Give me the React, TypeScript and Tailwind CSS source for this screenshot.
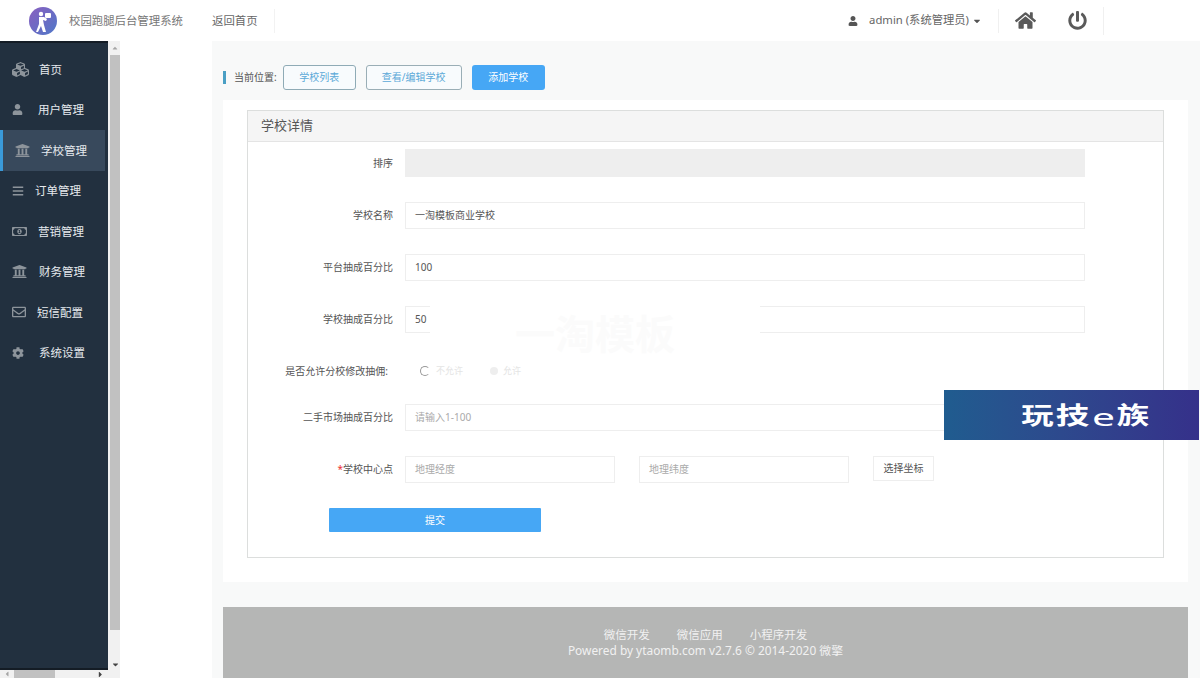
import {
  FaBars,
  FaCaretDown,
  FaCaretUp,
  FaCaretLeft,
  FaCaretRight,
  FaCog,
  FaCubes,
  FaHome,
  FaPowerOff,
  FaRegEnvelope,
  FaRegMoneyBillAlt,
  FaUniversity,
  FaUser,
} from 'react-icons/fa';

const font = 'font-["Noto_Sans","Noto_Sans_CJK_SC",sans-serif]';

const menus = [
  { title: '首页', icon: FaCubes, iconSize: 17, gap: 'gap-[10px]' },
  { title: '用户管理', icon: FaUser, iconSize: 11, gap: 'gap-[15px]' },
  { title: '学校管理', icon: FaUniversity, iconSize: 15, gap: 'gap-[11px]', active: true },
  { title: '订单管理', icon: FaBars, iconSize: 12, gap: 'gap-[11px]' },
  { title: '营销管理', icon: FaRegMoneyBillAlt, iconSize: 15, gap: 'gap-[11px]' },
  { title: '财务管理', icon: FaUniversity, iconSize: 15, gap: 'gap-[12px]' },
  { title: '短信配置', icon: FaRegEnvelope, iconSize: 14, gap: 'gap-[11px]' },
  { title: '系统设置', icon: FaCog, iconSize: 12, gap: 'gap-[15px]' },
];

function Header() {
  return (
    <div className="h-[41px] flex items-center bg-white shrink-0">
      <svg width="28" height="28" viewBox="0 0 28 28" className="ml-[29px] shrink-0">
        <defs>
          <linearGradient id="logo" x1="0" y1="0" x2="1" y2="1">
            <stop offset="0" stopColor="#8a5fc0" />
            <stop offset="1" stopColor="#4f78c8" />
          </linearGradient>
        </defs>
        <circle cx="14" cy="14" r="14" fill="url(#logo)" />
        <circle cx="12" cy="7" r="2.2" fill="#fff" />
        <path d="M10 10h5l3 2-1 2-3-1 1 5 2 7h-3l-2-6-3 6H7l3-8z" fill="#fff" />
        <rect x="16" y="6" width="6" height="5" rx="1" fill="#fff" />
      </svg>
      <span className="ml-[12px] w-[114px] text-[11.4px] whitespace-nowrap text-[#777]">校园跑腿后台管理系统</span>
      <span className="ml-[29px] text-[11.4px] text-[#666]">返回首页</span>
      <div className="ml-[16px] w-px h-[24px] bg-[#f2f2f2]" />
      <div className="ml-auto flex items-center h-[32px] text-[#666]">
        <FaUser size={10} className="text-[#555]" />
        <span className="ml-[11px] text-[11.3px]">admin (系统管理员)</span>
        <FaCaretDown size={10} className="ml-[3px] text-[#555]" />
        <div className="ml-[16px] w-px h-[24px] bg-[#f0f0f0]" />
        <FaHome size={21} className="ml-[16px] text-[#5a5a5a]" />
        <FaPowerOff size={19} className="ml-[32px] text-[#5a5a5a]" />
        <div className="ml-[16px] w-px h-[28px] bg-[#f0f0f0]" />
        <div className="w-[96px]" />
      </div>
    </div>
  );
}

function Sidebar() {
  return (
    <div className="w-[120px] shrink-0 flex flex-col">
      <div className="flex flex-1 min-h-0">
        <div className="w-[108px] bg-[#22303f] border-t-2 border-[#141c25] border-b-2 flex flex-col pt-[6px]">
          {menus.map((m) => {
            const Icon = m.icon;
            return (
              <div
                key={m.title}
                className={`h-[40.5px] flex items-center pl-[12px] ${m.gap} text-[11.5px] text-[#e6eaee] ${
                  m.active ? 'bg-[#38495c] border-l-[3px] border-[#3a9ad9] mr-[3px]' : ''
                }`}
              >
                <Icon size={m.iconSize} className="shrink-0 text-[#8d949b]" />
                <span>{m.title}</span>
              </div>
            );
          })}
        </div>
        <div className="w-[12px] bg-[#f1f1f1] flex flex-col items-center pl-[2px]">
          <FaCaretUp size={8} className="my-[3px] text-[#a5a5a5] shrink-0" />
          <div className="w-full h-[575px] bg-[#c1c1c1]" />
          <div className="flex-1" />
          <FaCaretDown size={9} className="mb-[1px] text-[#444]" />
        </div>
      </div>
      <div className="h-[8px] bg-[#f1f1f1] flex items-center overflow-hidden">
        <FaCaretLeft size={8} className="ml-[3px] text-[#a5a5a5]" />
        <div className="ml-[3px] w-[41px] h-full bg-[#c1c1c1]" />
        <FaCaretRight size={9} className="ml-[41px] text-[#444]" />
      </div>
    </div>
  );
}

function Row({
  label,
  className,
  labelClass = 'pr-[12px]',
  children,
}: {
  label: React.ReactNode;
  className: string;
  labelClass?: string;
  children: React.ReactNode;
}) {
  return (
    <div className={`flex items-center ${className}`}>
      <div className={`w-[157px] shrink-0 text-right text-[10px] whitespace-nowrap text-[#555] ${labelClass}`}>{label}</div>
      {children}
    </div>
  );
}

function Field({ value, placeholder, className }: { value?: string; placeholder?: string; className: string }) {
  return (
    <div className={`h-full flex items-center pl-[9px] pr-[10px] border border-[#eeeeee] bg-white text-[10px] ${className} ${value ? 'text-[#555]' : 'text-[#aaa]'}`}>
      {value ?? placeholder}
    </div>
  );
}

function Form() {
  return (
    <div className="border border-[#dcdedd] h-[448px] bg-white">
      <div className="h-[31px] flex items-center pl-[13px] bg-[#f5f5f5] border-b border-[#e4e4e4] text-[13px] text-[#555]">学校详情</div>
      <div className="pt-[7px]">
        <Row label="排序" className="h-[28px]">
          <div className="w-[680px] h-full bg-[#eeeeee]" />
        </Row>
        <Row label="学校名称" className="h-[27px] mt-[25px]">
          <Field value="一淘模板商业学校" className="w-[680px]" />
        </Row>
        <Row label="平台抽成百分比" className="h-[27px] mt-[25px]">
          <Field value="100" className="w-[680px]" />
        </Row>
        <Row label="学校抽成百分比" className="h-[27px] mt-[25px]">
          <Field value="50" className="w-[680px]" />
        </Row>
        <Row label="是否允许分校修改抽佣:" labelClass="pr-[17px]" className="h-[20px] mt-[28px]">
          <div className="ml-[15px] w-[10px] h-[10px] rounded-full border border-[#999] border-r-transparent" />
          <span className="ml-[6px] text-[9px] text-[#e4e4e4]">不允许</span>
          <div className="ml-[27px] w-[8px] h-[8px] rounded-full bg-[#eeeeee]" />
          <span className="ml-[5px] text-[9px] text-[#e4e4e4]">允许</span>
        </Row>
        <Row label="二手市场抽成百分比" className="h-[27px] mt-[23px]">
          <Field placeholder="请输入1-100" className="w-[680px]" />
        </Row>
        <Row label={<><span className="text-[#e33]">*</span>学校中心点</>} className="h-[27px] mt-[25px]">
          <Field placeholder="地理经度" className="w-[210px]" />
          <Field placeholder="地理纬度" className="w-[210px] ml-[24px]" />
          <div className="ml-[24px] w-[61px] h-[25px] self-start flex items-center justify-center border border-[#eeeeee] text-[10px] text-[#555]">选择坐标</div>
        </Row>
        <div className="ml-[81px] mt-[25px] w-[212px] h-[24px] flex items-center justify-center bg-[#46a7f5] text-[10px] text-white rounded-[1px]">提交</div>
      </div>
    </div>
  );
}

function Main() {
  return (
    <div className="flex-1 min-w-0 flex">
      <div className="w-[92px] bg-white shrink-0" />
      <div className="flex-1 min-w-0 bg-[#f8f9f9] pl-[11px] pr-[12px] pt-[24px]">
        <div className="flex items-center h-[25px]">
          <div className="w-[3px] h-[13px] bg-[#4a9fc4]" />
          <span className="ml-[8px] text-[10px] text-[#555]">当前位置:</span>
          <div className="ml-[6px] w-[73px] h-full flex items-center justify-center rounded-[3px] border border-[#8fabb6] bg-[#f8fbfd] text-[10px] text-[#5ba9d8]">学校列表</div>
          <div className="ml-[10px] w-[96px] h-full flex items-center justify-center rounded-[3px] border border-[#9aaeb6] bg-[#f8fbfd] text-[10px] text-[#5ba9d8]">查看/编辑学校</div>
          <div className="ml-[10px] w-[73px] h-full flex items-center justify-center rounded-[3px] bg-[#46a7f5] text-[10px] text-white">添加学校</div>
        </div>
        <div className="mt-[10px] bg-white px-[24px] pt-[10px] pb-[24px]">
          <Form />
        </div>
        <div className="mt-[25px] h-[71px] bg-[#b5b6b5] flex flex-col items-center pt-[21px]">
          <div className="flex gap-[27px] text-[11.5px] leading-[14px] text-[#f1f1f1]">
            <span>微信开发</span>
            <span>微信应用</span>
            <span>小程序开发</span>
          </div>
          <div className="text-[11.9px] leading-[16px] text-[#f1f1f1]">Powered by ytaomb.com v2.7.6 © 2014-2020 微擎</div>
        </div>
      </div>
    </div>
  );
}

export default function App() {
  return (
    <div className={`relative w-[1200px] h-[678px] overflow-hidden bg-white flex flex-col ${font}`}>
      <Header />
      <div className="flex flex-1 min-h-0">
        <Sidebar />
        <Main />
      </div>
      {/* 워터마크 */}
      <div className="absolute left-[430px] top-[300px] w-[330px] h-[56px] bg-white flex items-end justify-center text-[40px] leading-[44px] font-bold text-[#fbfbfb]">
        一淘模板
      </div>
      <div className="absolute left-[944px] top-[390px] w-[255px] h-[50px] bg-gradient-to-r from-[#1f5c8f] to-[#35308a] flex items-center text-white font-bold text-[24px] leading-none">
        <span className="ml-[77px] w-[33px] text-center inline-block scale-x-[1.35]">玩</span>
        <span className="ml-[1px] w-[35px] text-center inline-block scale-x-[1.4]">技</span>
        <span className="ml-[2px] w-[23px] text-center inline-block scale-x-[1.7] text-[24px] font-normal self-end mb-[11px]">e</span>
        <span className="ml-[2px] w-[32px] text-center inline-block scale-x-[1.35]">族</span>
      </div>
    </div>
  );
}
